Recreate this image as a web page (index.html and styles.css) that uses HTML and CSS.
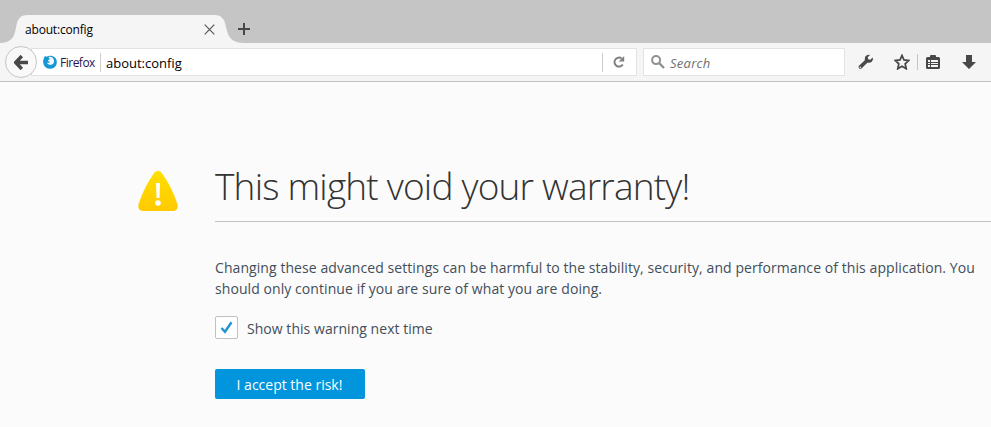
FILE: index.html
```html
<!DOCTYPE html>
<html lang="en">
<head>
<meta charset="utf-8">
<title>about:config</title>
<link rel="stylesheet" href="styles.css">
</head>
<body>
<header class="tabstrip">
  <div class="tab">
    <svg class="tab-shape" width="244" height="28" viewBox="0 0 244 28"><path d="M0 28C10 28 14 23 15.500 15L16.500 10C18 3 21 0 28 0H214C221 0 224 3 225.500 10L227 16C229 24 234 28 244 28Z" fill="#f5f5f5"/></svg>
    <span class="tab-title">about:config</span>
    <svg class="tab-close" width="11" height="11" viewBox="0 0 11 11"><path d="M.7.7l9.600 9.600M10.300.7L.7 10.300" stroke="#555" stroke-width="1.200"/></svg>
  </div>
  <svg class="new-tab" width="12" height="12" viewBox="0 0 12 12"><path d="M6 0v12M0 6h12" stroke="#484848" stroke-width="2"/></svg>
</header>
<nav class="toolbar">
  <div class="back"><svg width="14" height="15" viewBox="0 0 14 15"><path d="M7.800 1L1.700 7.500L7.800 14M2.500 7.500H14" fill="none" stroke="#484848" stroke-width="3.400"/></svg></div>
  <div class="urlbar">
    <svg class="fox" width="14" height="14" viewBox="0 0 14 14"><path d="M2 1l1.500.8A7 7 0 0 1 12.500 3C14 5 14.300 8 13 10.500A7 7 0 0 1 .8 10C-.3 7.500 0 4 2 1Z" fill="#1697d5"/><path d="M5.300 2.100C7.500 1.200 10 2 10.600 4.200C11.700 6 11 8.700 9 9.500C6.800 10.500 4.500 9.400 4 7.600C5 8.200 6.400 7.700 7 6.900L5 6L5.200 5L7 4.300Z" fill="#eef8fc"/></svg>
    <span class="identity">Firefox</span>
    <i class="rule"></i>
    <span class="address">about:config</span>
    <i class="rule rule-end"></i>
    <svg class="reload" width="12" height="12" viewBox="0 0 12 12"><path d="M9.800 8.500A4.500 4.500 0 1 1 8.700 2.500" fill="none" stroke="#808080" stroke-width="2"/><path d="M11.200 0V5.500H5.700Z" fill="#808080"/></svg>
  </div>
  <div class="search">
    <svg width="14" height="14" viewBox="0 0 14 14"><circle cx="5.100" cy="5.100" r="4" fill="none" stroke="#909090" stroke-width="2"/><path d="M8 8l5 5" stroke="#909090" stroke-width="2.400"/></svg>
    <span class="placeholder">Search</span>
  </div>
  <div class="tools">
    <svg width="16" height="16" viewBox="0 0 16 16"><path d="M14.600 3.500L12.300 5.800L10.200 5.300L9.700 3.300L12 .9C10 .3 7.600 1.300 7 3.500C6.700 4.500 6.900 5.500 6.800 6.200L1 11.700C-.4 13.300 1.700 15.800 3.500 14.400L9.300 8.700C10.500 8.700 12.500 9 13.900 7.500C15 6.400 15.200 5 14.600 3.500ZM2.300 12.500a.8.8 0 1 1 0 1.600a.8.8 0 0 1 0-1.600Z" fill="#484848" fill-rule="evenodd"/></svg>
    <svg class="star" width="16" height="16" viewBox="0 0 16 16"><path d="M8 1.500L10 6L14.800 6.500L11.200 9.800L12.200 14.700L8 12.200L3.800 14.700L4.800 9.800L1.200 6.500L6 6Z" fill="none" stroke="#484848" stroke-width="1.800"/></svg>
    <i class="divider"></i>
    <svg class="clip" width="14" height="15" viewBox="0 0 14 15"><path d="M1.500 2H4V1Q4 0 5 0H9Q10 0 10 1V2H12.500Q14 2 14 3.500V12.500Q14 14 12.500 14H1.500Q0 14 0 12.500V3.500Q0 2 1.500 2Z" fill="#484848"/><path d="M2 5h2v2H2zM5 5h7v2H5zM2 8h2v1H2zM5 8h7v1H5zM2 10h2v2H2zM5 10h7v2H5z" fill="#f5f5f5"/></svg>
    <svg class="download" width="14" height="14" viewBox="0 0 14 14"><path d="M4 0H10V7H14L7 14L0 7H4Z" fill="#484848"/></svg>
  </div>
</nav>
<main class="page">
  <svg class="warning" width="42" height="42" viewBox="0 0 42 42"><defs><linearGradient id="gold" x2="0" y2="1"><stop stop-color="#ffe000"/><stop offset="1" stop-color="#ffc900"/></linearGradient></defs><path d="M17.500 2.500Q21 -.8 24.500 2.500Q35 17 40.500 34.500Q41.500 40 36.500 41H5.500Q.5 40 1.500 34.500Q7 17 17.500 2.500Z" fill="url(#gold)"/><path d="M19 13H23L22.500 28H19.500Z" fill="#fff"/><circle cx="21" cy="33" r="2.800" fill="#fff"/></svg>
  <section class="content">
    <h1><span>This might void your warranty!</span></h1>
    <p><span class="line-one">Changing these advanced settings can be harmful to the stability, security, and performance of this application. You</span><br><span class="line-two">should only continue if you are sure of what you are doing.</span></p>
    <label class="check"><span class="box"><svg width="13" height="13" viewBox="0 0 13 13"><path d="M1.500 7L5 10.800L11.500 1.300" fill="none" stroke="#2292d0" stroke-width="2.400"/></svg></span><span class="check-text">Show this warning next time</span></label>
    <button class="accept"><span>I accept the risk!</span></button>
  </section>
</main>
</body>
</html>
```
FILE: styles.css
```css
* { box-sizing: border-box; }
body { margin: 0; height: 427px; overflow: hidden; background: #fbfbfb; color: #424e5a; font-family: "Open Sans", "Noto Sans", sans-serif; }
svg { display: block; flex: none; }
span { white-space: nowrap; }
.tabstrip { height: 43px; padding-top: 15px; background: #c5c5c5; display: flex; }
.tab { position: relative; width: 238px; height: 28px; padding-left: 25px; display: flex; align-items: center; flex: none; }
.tab-shape { position: absolute; left: 0; top: 0; }
.tab-title { position: relative; width: 178.500px; font-size: 12px; letter-spacing: -.18px; color: #000; }
.tab-close { position: relative; }
.new-tab { margin-top: 8px; }
.toolbar { height: 39px; background: #f5f5f5; border-bottom: 1px solid #c1c1c1; padding-left: 5px; display: flex; align-items: center; }
.back { width: 32px; height: 32px; border: 1px solid #c5c5c5; border-radius: 50%; background: #f9f9f9; display: flex; align-items: center; justify-content: center; flex: none; z-index: 1; }
.urlbar { width: 606px; height: 28px; margin-left: -6px; padding-left: 11px; background: #fff; border: 1px solid #e2e2e2; display: flex; align-items: center; color: #000; flex: none; }
.identity { margin-left: 3px; width: 40px; font-size: 12px; letter-spacing: -.5px; color: #281650; }
.rule { width: 1px; height: 19px; background: #ccc; }
.address { margin-left: 5px; width: 496px; padding-top: 2px; font-size: 13px; }
.reload { margin-left: 10px; }
.search { width: 202px; height: 28px; margin-left: 6px; padding-left: 7px; background: #fff; border: 1px solid #e2e2e2; display: flex; align-items: center; flex: none; }
.placeholder { margin-left: 5px; padding-top: 2px; font-size: 13px; font-style: italic; letter-spacing: .25px; color: #707070; }
.tools { margin-left: 13px; display: flex; align-items: center; }
.star { margin-left: 20px; }
.divider { width: 1px; height: 16px; margin-left: 7px; background: #c4c4c4; }
.clip { margin-left: 8px; }
.download { margin-left: 22px; }
.page { display: flex; }
.warning { margin: 88px 36px 0 137px; }
.content { flex: 1; padding-top: 79px; }
h1 { margin: 0; height: 61px; border-bottom: 1px solid #c1c1c1; font-size: 37px; line-height: 50px; font-weight: 300; letter-spacing: -.8px; color: #333; }
p { margin: 35px 0 0; font-size: 14px; line-height: 21px; }
.line-one, .line-two { letter-spacing: .073px; }
.check { margin-top: 17px; height: 23px; display: flex; align-items: center; font-size: 14px; }
.box { width: 23px; height: 23px; border: 1px solid #c1c1c1; border-radius: 2px; background: #fff; display: flex; align-items: center; justify-content: center; }
.check-text { margin-left: 9px; padding-top: 2px; letter-spacing: .04px; }
.accept { display: block; width: 150px; height: 30px; margin-top: 30px; padding: 1px 1px 0 0; border: 0; border-radius: 2px; background: #0095dd; color: #fff; font: 14px/29px "Open Sans", sans-serif; }
```
